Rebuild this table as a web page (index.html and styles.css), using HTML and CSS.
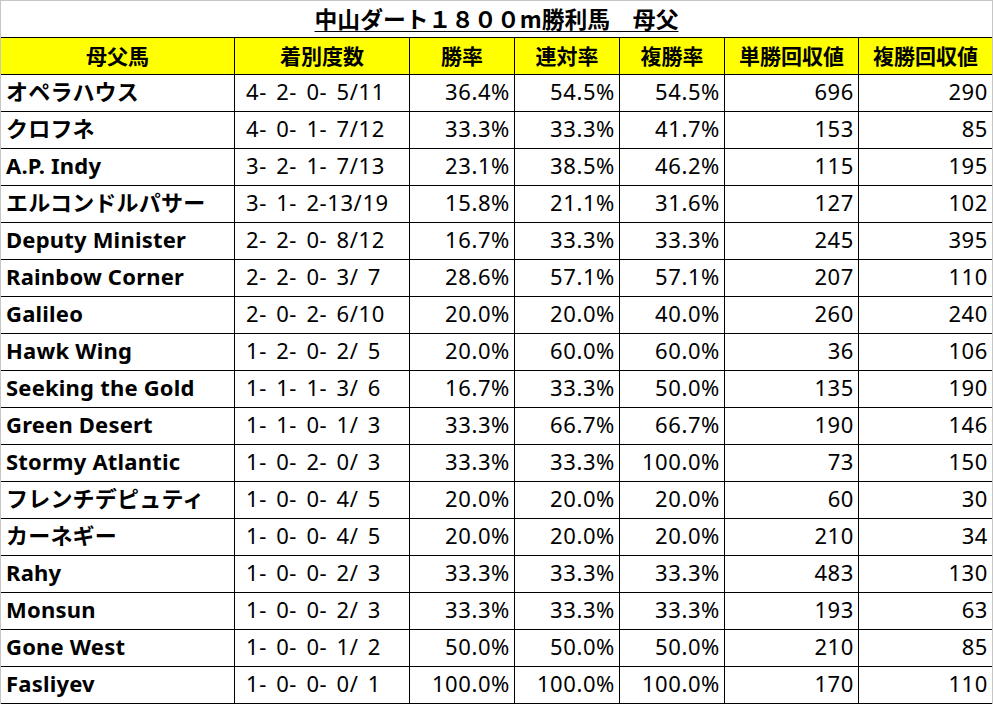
FILE: index.html
```html
<!DOCTYPE html>
<html lang="ja">
<head>
<meta charset="utf-8">
<link rel="stylesheet" href="styles.css">
</head>
<body>
<div class="frame">
  <div class="title"><span>中山ダート１８００m勝利馬　母父</span></div>
  <table class="grid">
    <colgroup>
      <col class="c1"><col class="c2"><col class="c3"><col class="c4"><col class="c5"><col class="c6"><col class="c7">
    </colgroup>
    <thead>
      <tr><th>母父馬</th><th>着別度数</th><th>勝率</th><th>連対率</th><th>複勝率</th><th>単勝回収値</th><th>複勝回収値</th></tr>
    </thead>
    <tbody>
      <tr><td class="name">オペラハウス</td><td class="rec">4- 2- 0- 5/11</td><td class="num">36.4%</td><td class="num">54.5%</td><td class="num">54.5%</td><td class="num">696</td><td class="num">290</td></tr>
      <tr><td class="name">クロフネ</td><td class="rec">4- 0- 1- 7/12</td><td class="num">33.3%</td><td class="num">33.3%</td><td class="num">41.7%</td><td class="num">153</td><td class="num">85</td></tr>
      <tr><td class="name">A.P. Indy</td><td class="rec">3- 2- 1- 7/13</td><td class="num">23.1%</td><td class="num">38.5%</td><td class="num">46.2%</td><td class="num">115</td><td class="num">195</td></tr>
      <tr><td class="name">エルコンドルパサー</td><td class="rec">3- 1- 2-13/19</td><td class="num">15.8%</td><td class="num">21.1%</td><td class="num">31.6%</td><td class="num">127</td><td class="num">102</td></tr>
      <tr><td class="name">Deputy Minister</td><td class="rec">2- 2- 0- 8/12</td><td class="num">16.7%</td><td class="num">33.3%</td><td class="num">33.3%</td><td class="num">245</td><td class="num">395</td></tr>
      <tr><td class="name">Rainbow Corner</td><td class="rec">2- 2- 0- 3/ 7</td><td class="num">28.6%</td><td class="num">57.1%</td><td class="num">57.1%</td><td class="num">207</td><td class="num">110</td></tr>
      <tr><td class="name">Galileo</td><td class="rec">2- 0- 2- 6/10</td><td class="num">20.0%</td><td class="num">20.0%</td><td class="num">40.0%</td><td class="num">260</td><td class="num">240</td></tr>
      <tr><td class="name">Hawk Wing</td><td class="rec">1- 2- 0- 2/ 5</td><td class="num">20.0%</td><td class="num">60.0%</td><td class="num">60.0%</td><td class="num">36</td><td class="num">106</td></tr>
      <tr><td class="name">Seeking the Gold</td><td class="rec">1- 1- 1- 3/ 6</td><td class="num">16.7%</td><td class="num">33.3%</td><td class="num">50.0%</td><td class="num">135</td><td class="num">190</td></tr>
      <tr><td class="name">Green Desert</td><td class="rec">1- 1- 0- 1/ 3</td><td class="num">33.3%</td><td class="num">66.7%</td><td class="num">66.7%</td><td class="num">190</td><td class="num">146</td></tr>
      <tr><td class="name">Stormy Atlantic</td><td class="rec">1- 0- 2- 0/ 3</td><td class="num">33.3%</td><td class="num">33.3%</td><td class="num">100.0%</td><td class="num">73</td><td class="num">150</td></tr>
      <tr><td class="name">フレンチデピュティ</td><td class="rec">1- 0- 0- 4/ 5</td><td class="num">20.0%</td><td class="num">20.0%</td><td class="num">20.0%</td><td class="num">60</td><td class="num">30</td></tr>
      <tr><td class="name">カーネギー</td><td class="rec">1- 0- 0- 4/ 5</td><td class="num">20.0%</td><td class="num">20.0%</td><td class="num">20.0%</td><td class="num">210</td><td class="num">34</td></tr>
      <tr><td class="name">Rahy</td><td class="rec">1- 0- 0- 2/ 3</td><td class="num">33.3%</td><td class="num">33.3%</td><td class="num">33.3%</td><td class="num">483</td><td class="num">130</td></tr>
      <tr><td class="name">Monsun</td><td class="rec">1- 0- 0- 2/ 3</td><td class="num">33.3%</td><td class="num">33.3%</td><td class="num">33.3%</td><td class="num">193</td><td class="num">63</td></tr>
      <tr><td class="name">Gone West</td><td class="rec">1- 0- 0- 1/ 2</td><td class="num">50.0%</td><td class="num">50.0%</td><td class="num">50.0%</td><td class="num">210</td><td class="num">85</td></tr>
      <tr><td class="name">Fasliyev</td><td class="rec">1- 0- 0- 0/ 1</td><td class="num">100.0%</td><td class="num">100.0%</td><td class="num">100.0%</td><td class="num">170</td><td class="num">110</td></tr>
    </tbody>
  </table>
</div>
</body>
</html>
```

FILE: styles.css
```css
html, body {
  margin: 0;
  padding: 0;
  background: #ffffff;
}

.frame {
  box-sizing: border-box;
  width: 993px;
  height: 704px;
  border-top: 1px solid #c6c6c6;
  border-left: 1px solid #c6c6c6;
  border-right: 1px solid #c6c6c6;
  font-family: "Noto Sans CJK JP", "Noto Sans", sans-serif;
  color: #000;
  overflow: hidden;
}

.title {
  height: 36px;
  display: flex;
  align-items: flex-end;
  justify-content: center;
}

.title span {
  font-size: 22.8px;
  font-weight: bold;
  line-height: 28px;
  text-decoration: underline;
  text-underline-offset: 3px;
  text-decoration-thickness: 1px;
  margin-bottom: 4px;
}

.grid {
  border-collapse: separate;
  border-spacing: 0;
  table-layout: fixed;
  width: 991px;
  border-top: 1px solid #000;
  font-size: 22px;
}

.c1 { width: 234px; }
.c2 { width: 175px; }
.c3 { width: 105px; }
.c4 { width: 105px; }
.c5 { width: 105px; }
.c6 { width: 134px; }
.c7 { width: 133px; }

.grid th,
.grid td {
  box-sizing: border-box;
  height: 37px;
  padding: 0;
  border-right: 1px solid #000;
  border-bottom: 1px solid #000;
  white-space: pre;
  overflow: hidden;
  vertical-align: top;
  line-height: 33px;
}

.grid th:last-child,
.grid td:last-child {
  border-right: none;
}

.grid th {
  background: #ffff00;
  font-weight: bold;
  text-align: center;
  font-size: 21px;
  line-height: 35px;
}

.grid td.name {
  font-family: "Noto Sans", "Noto Sans CJK JP", sans-serif;
  font-weight: bold;
  text-align: left;
  padding-left: 5px;
  letter-spacing: 0.2px;
}

.grid td.rec {
  font-family: "Noto Sans", "Noto Sans CJK JP", sans-serif;
  text-align: left;
  padding-left: 11px;
  word-spacing: 3px;
  letter-spacing: 0.6px;
}

.grid td.num {
  font-family: "Noto Sans", "Noto Sans CJK JP", sans-serif;
  text-align: right;
  padding-right: 4px;
  letter-spacing: 0.6px;
}
```
